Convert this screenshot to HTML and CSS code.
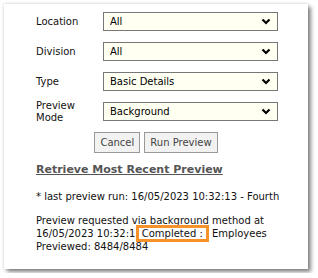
FILE: index.html
```html
<!DOCTYPE html>
<html>
<head>
	<link rel="stylesheet" href="styles.css">
</head>
<body>
	<div class="card">
		<div class="form">
			<label>Location</label>
			<select><option>All</option></select>
			<label>Division</label>
			<select><option>All</option></select>
			<label>Type</label>
			<select><option>Basic Details</option></select>
			<label>Preview Mode</label>
			<select><option>Background</option></select>
		</div>
		<div class="buttons">
			<button>Cancel</button>
			<button>Run Preview</button>
		</div>
		<a class="retrieve" href="#">Retrieve Most Recent Preview</a>
		<p class="last">* last preview run: 16/05/2023 10:32:13 - Fourth</p>
		<p class="status">Preview requested via background method at 16/05/2023 10:32:13<span class="mark">Completed :</span> Employees Previewed: 8484/8484</p>
	</div>
</body>
</html>
```
FILE: styles.css
```css
body{
	margin: 0;
	background: white;
	font-family: Tahoma, "DejaVu Sans", sans-serif;
	font-size: 10px;
	color: #111;
}
.card{
	margin: 4px;
	width: 304px;
	height: 265px;
	box-sizing: border-box;
	padding: 8px 0 0 32px;
	background: white;
	box-shadow: 0 0 3px rgba(0,0,0,.2), 3px 3px 4px rgba(0,0,0,.45);
}
.form{
	display: grid;
	grid-template-columns: 67px 175px;
	grid-auto-rows: 19px;
	row-gap: 11px;
	align-items: center;
}
.form label{
	line-height: 12px;
}
select{
	appearance: none;
	-webkit-appearance: none;
	height: 19px;
	width: 175px;
	margin: 0;
	padding: 0 0 0 6px;
	border: 1px solid #777;
	border-radius: 0;
	background: #fffff2 url("data:image/svg+xml,%3Csvg xmlns='http://www.w3.org/2000/svg' width='10' height='7'%3E%3Cpath d='M1.5 1.5 5 5 8.5 1.5' fill='none' stroke='black' stroke-width='2.2'/%3E%3C/svg%3E") no-repeat right 6px center;
	font: inherit;
	color: #000;
}
.buttons{
	display: flex;
	justify-content: center;
	gap: 4px;
	width: 242px;
	padding-right: 2px;
	box-sizing: border-box;
	margin-top: 11px;
}
button{
	height: 21px;
	margin: 0;
	padding: 0 5px;
	border: 1px solid #999;
	border-radius: 0;
	background: #f2f2f2;
	font: inherit;
	color: #444;
}
.retrieve{
	display: block;
	margin-top: 10px;
	line-height: 13px;
	font-size: 11px;
	font-weight: bold;
	color: #555;
	text-decoration: underline;
}
p{
	margin: 0;
	line-height: 13px;
	width: 262px;
}
.last{
	margin-top: 14px;
}
.status{
	margin-top: 11px;
}
.mark{
	position: relative;
	margin-left: -6px;
	padding: 0 3px;
	background: white;
	border: 3px solid #f7922a;
}
```
